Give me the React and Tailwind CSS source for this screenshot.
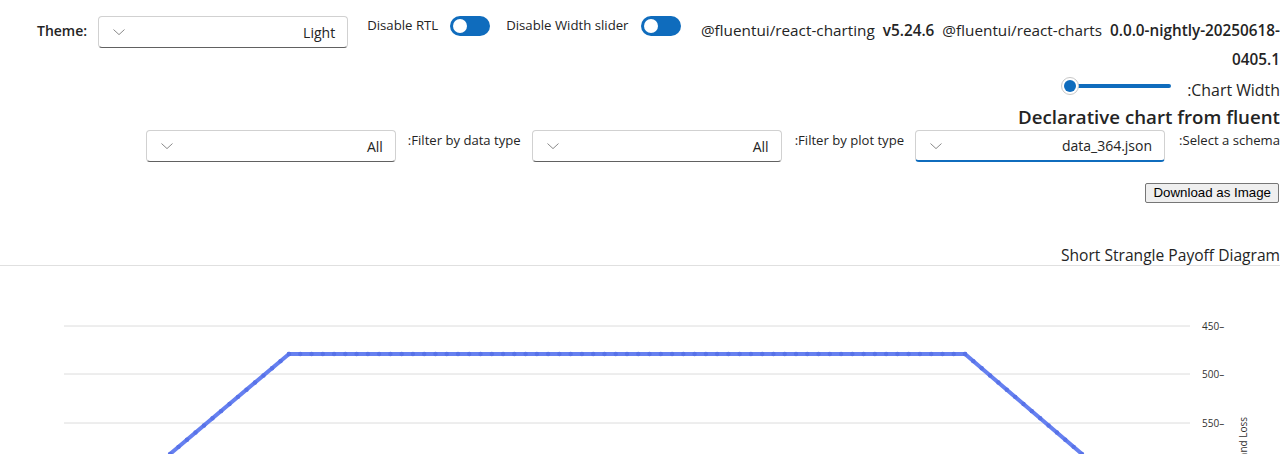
import React from "react";

const font = { fontFamily: '"Open Sans", "Noto Sans", sans-serif' };

function Chevron() {
  return (
    <svg width="12" height="12" viewBox="0 0 12 12" className="shrink-0">
      <path d="M0.8 3.8 L6 8.6 L11.2 3.8" fill="none" stroke="#8a8a8a" strokeWidth="1" strokeLinecap="round" strokeLinejoin="round" />
    </svg>
  );
}

function Dropdown({ value, focused, className = "" }) {
  return (
    <div
      className={
        "relative flex h-[32px] w-[250px] shrink-0 items-center justify-between rounded-[4px] border border-[#d1d1d1] bg-white pl-[14px] pr-[12px] " +
        (focused ? "border-b-2 border-b-[#0f6cbd] " : "border-b-[#616161] ") +
        className
      }
    >
      <Chevron />
      <span className="text-[14px] text-[#242424]">{value}</span>
    </div>
  );
}

function Toggle() {
  return (
    <div className="flex h-[20px] w-[40px] shrink-0 items-center rounded-full bg-[#0f6cbd] pl-[3px]">
      <div className="h-[14px] w-[14px] rounded-full bg-white" />
    </div>
  );
}

function Chart() {
  const pts = [
    [170, 188],
    [289, 88],
    [965, 88],
    [1082, 188],
  ];
  const dots = [];
  for (let s = 0; s < pts.length - 1; s++) {
    const [x1, y1] = pts[s];
    const [x2, y2] = pts[s + 1];
    const len = Math.hypot(x2 - x1, y2 - y1);
    const n = Math.round(len / 11.2);
    for (let i = 0; i <= n; i++) {
      dots.push([x1 + ((x2 - x1) * i) / n, y1 + ((y2 - y1) * i) / n]);
    }
  }
  return (
    <svg width="1280" height="188" className="block" style={{ fontFamily: '"Open Sans", sans-serif' }}>
      {[60, 108, 157].map((y) => (
        <line key={y} x1="64" x2="1190" y1={y} y2={y} stroke="#dcdcdc" strokeWidth="1" />
      ))}
      {[
        [60, "450"],
        [108, "500"],
        [157, "550"],
      ].map(([y, t]) => (
        <text key={t} x="1202" y={y + 4} fontSize="10" fill="#323130">
          {t}
          {"\u2013"}
        </text>
      ))}
      <polyline
        points={pts.map((p) => p.join(",")).join(" ")}
        fill="none"
        stroke="#6680f0"
        strokeWidth="4"
        strokeLinejoin="miter"
      />
      {dots.map(([x, y], i) => (
        <circle key={i} cx={x} cy={y} r="2.2" fill="#5872e8" />
      ))}
      <text
        x="0"
        y="0"
        fontSize="10"
        fill="#323130"
        textAnchor="end"
        transform="translate(1247 151) rotate(-90)"
      >
        Profit and Loss
      </text>
    </svg>
  );
}

export default function App() {
  return (
    <div className="w-[1280px] h-[454px] overflow-hidden bg-white text-[#242424]" style={font}>
      {/* Row 1 */}
      <div className="flex h-[74px] items-start pl-[37px] pt-[16px]">
        <div className="flex items-center">
          <span className="mr-[11px] mt-[-3px] text-[14px] font-semibold">Theme:</span>
          <Dropdown value="Light" />
        </div>
        <div className="ml-[19px] flex h-[20px] items-center">
          <span className="mr-[12px] text-[13.2px]">Disable RTL</span>
          <Toggle />
        </div>
        <div className="ml-[16px] flex h-[20px] items-center">
          <span className="mr-[12px] text-[13.2px]">Disable Width slider</span>
          <Toggle />
        </div>
        <div className="ml-[16px] flex-1 text-[15.3px] leading-[29px]">
          <div className="flex justify-end gap-[8px] whitespace-nowrap">
            <span>@fluentui/react-charting</span>
            <span className="font-semibold">v5.24.6</span>
            <span>@fluentui/react-charts</span>
            <span className="font-semibold">0.0.0-nightly-20250618-</span>
          </div>
          <div className="text-right font-semibold">0405.1</div>
        </div>
      </div>

      {/* Slider row */}
      <div className="mt-[2px] flex h-[24px] items-start justify-end">
        <div className="relative flex h-[20px] w-[110px] items-center">
          <div className="ml-[8px] h-[4px] w-[102px] rounded-full bg-[#0f6cbd]" />
          <div className="absolute left-0 top-[1px] h-[18px] w-[18px] rounded-full border border-[#c8c8c8] bg-white p-[2px]">
            <div className="h-full w-full rounded-full bg-[#0f6cbd]" />
          </div>
        </div>
        <span className="ml-[16px] mt-[4px] text-[15.9px] leading-[20px]">:Chart Width</span>
      </div>

      {/* Heading */}
      <div className="mt-[4px] flex justify-end">
        <span className="text-[18.7px] font-semibold leading-[26px]">Declarative chart from fluent</span>
      </div>

      {/* Filters row */}
      <div className="flex items-start justify-end">
        <Dropdown value="All" />
        <span className="ml-[12px] text-[13.1px] leading-[20px]">:Filter by data type</span>
        <Dropdown value="All" className="ml-[11px]" />
        <span className="ml-[13px] text-[13.1px] leading-[20px]">:Filter by plot type</span>
        <Dropdown value="data_364.json" focused className="ml-[11px]" />
        <span className="ml-[14px] text-[13.1px] leading-[20px]">:Select a schema</span>
      </div>

      {/* Download button */}
      <div className="mt-[21px] flex justify-end pr-[1px]">
        <button
          className="h-[20px] rounded-[2px] border border-[#767676] bg-[#efefef] px-[7px] text-[13.3px] leading-[18px] text-black"
          style={{ fontFamily: '"Liberation Sans", Arial, sans-serif' }}
        >
          Download as Image
        </button>
      </div>

      {/* Chart title */}
      <div className="mt-[42px] flex justify-end border-b border-[#e0e0e0]">
        <span className="text-[15.6px] leading-[20px]">Short Strangle Payoff Diagram</span>
      </div>

      <Chart />
    </div>
  );
}
